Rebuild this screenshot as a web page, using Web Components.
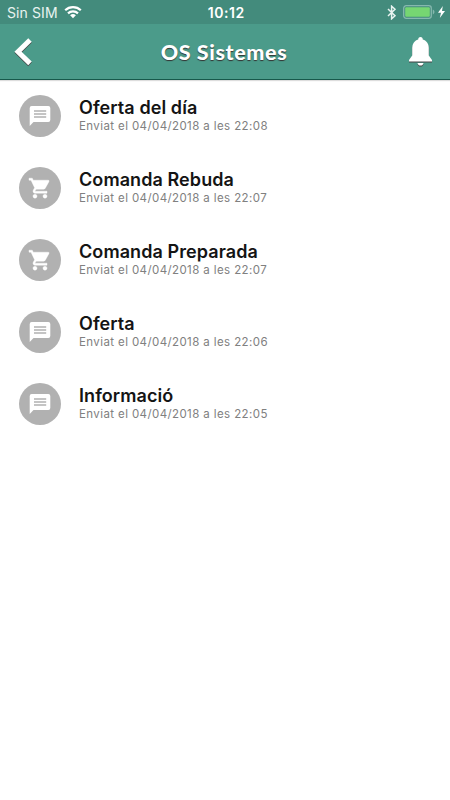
<!DOCTYPE html>
<html lang="ca">
<head>
	<meta charset="utf-8">
	<title>OS Sistemes</title>
	<style>
		body {
			margin: 0;
			background: #fff;
			font-family: Inter, "Liberation Sans", sans-serif;
		}
	</style>
</head>
<body>
	<app-header>
		<status-bar slot="status" carrier="Sin SIM" time="10:12"></status-bar>
		OS Sistemes
	</app-header>
	<notification-list>
		<notification-item icon="message" date="04/04/2018" time="22:08">Oferta del día</notification-item>
		<notification-item icon="cart" date="04/04/2018" time="22:07">Comanda Rebuda</notification-item>
		<notification-item icon="cart" date="04/04/2018" time="22:07">Comanda Preparada</notification-item>
		<notification-item icon="message" date="04/04/2018" time="22:06">Oferta</notification-item>
		<notification-item icon="message" date="04/04/2018" time="22:05">Informació</notification-item>
	</notification-list>

	<script>
		const icons = {
			message: /*html*/`
				<svg width="42" height="42" viewBox="0 0 42 42">
					<path fill="#fff" d="M12.700 11h16.600a2 2 0 0 1 2 2v12a2 2 0 0 1-2 2H14.500L10.700 31V13a2 2 0 0 1 2-2z"/>
					<path stroke="#b1b1b1" stroke-width="1.300" d="M15 16h12.200M15 19h12.200M15 22h12.200"/>
				</svg>`,
			cart: /*html*/`
				<svg width="42" height="42" viewBox="0 0 42 42">
					<g fill="#fff" stroke="#fff" stroke-width=".4" transform="translate(9 9.200)">
						<path d="M7 18c-1.100 0-1.990.9-1.990 2S5.900 22 7 22s2-.9 2-2-.9-2-2-2zM1 2v2h2l3.600 7.590-1.350 2.450c-.16.28-.25.61-.25.96 0 1.100.9 2 2 2h12v-2H7.420c-.14 0-.25-.11-.25-.25l.03-.12.9-1.630h7.450c.75 0 1.410-.41 1.750-1.030l3.580-6.490A1 1 0 0 0 20 4H5.210l-.94-2H1zm16 16c-1.100 0-1.990.9-1.990 2s.89 2 1.990 2 2-.9 2-2-.9-2-2-2z"/>
					</g>
				</svg>`
		};

		class StatusBar extends HTMLElement {
			constructor() {
				super();

				const shadowRoot = this.attachShadow({ mode: 'open' });
				shadowRoot.innerHTML = /*html*/`
					<style>
						:host {
							display: grid;
							grid-template-columns: 1fr auto 1fr;
							align-items: center;
							box-sizing: border-box;
							height: 24px;
							padding: 1px 5.5px 0 7px;
							background: #438b7c;
							color: #fff;
							font: 400 14px/22px Inter, sans-serif;
						}
						svg {
							display: block;
						}
						.left, .right {
							display: flex;
							align-items: center;
						}
						.left {
							gap: 6px;
							color: #e8f3f0;
							letter-spacing: 0.1px;
						}
						.right {
							justify-content: flex-end;
						}
						.right svg {
							position: relative;
							top: -0.5px;
						}
						#time {
							padding-left: 1px;
							font-weight: 600;
							font-size: 14px;
							letter-spacing: 0.5px;
						}
						.bluetooth {
							margin-right: 6px;
						}
						.bolt {
							margin-left: 3px;
						}
					</style>
					<div class="left">
						<span id="carrier"></span>
						<svg width="18" height="13" viewBox="0 0 18 13">
							<g fill="none" stroke="#fff" stroke-width="2.200">
								<path d="M1.200 4.300a11.200 11.200 0 0 1 15.600 0"/>
								<path d="M4 7.400a7.200 7.200 0 0 1 10 0"/>
							</g>
							<path fill="#fff" d="M9 12.300l-2.900-3a4.200 4.200 0 0 1 5.800 0z"/>
						</svg>
					</div>
					<span id="time"></span>
					<div class="right">
						<svg class="bluetooth" width="10" height="15" viewBox="0 0 10 15">
							<path fill="none" stroke="#e8f3f0" stroke-width="1.500" d="M1 4l7 6.800-3.400 3V1.200L8 4.200 1 11"/>
						</svg>
						<svg width="32" height="14" viewBox="0 0 32 14">
							<rect x=".7" y=".7" width="27.600" height="12.600" rx="2.500" fill="none" stroke="#86b8ae" stroke-width="1.300"/>
							<rect x="2.200" y="2.200" width="24.600" height="9.600" rx="1" fill="#76d672"/>
							<path fill="#86b8ae" d="M29.800 4.600c2.200.8 2.200 4 0 4.800z"/>
						</svg>
						<svg class="bolt" width="7" height="12" viewBox="0 0 7 12">
							<path fill="#fff" d="M4.800 0L0 6.700h3L1.800 12 7 5H4z"/>
						</svg>
					</div>
				`;
				this.carrier = shadowRoot.querySelector('#carrier');
				this.time = shadowRoot.querySelector('#time');
			}

			connectedCallback() {
				this.carrier.textContent = this.getAttribute('carrier');
				this.time.textContent = this.getAttribute('time');
			}
		}

		class AppHeader extends HTMLElement {
			constructor() {
				super();

				const shadowRoot = this.attachShadow({ mode: 'open' });
				shadowRoot.innerHTML = /*html*/`
					<style>
						:host {
							display: block;
							box-sizing: border-box;
							height: 80px;
							background: #4b9b8a;
							border-bottom: 1px solid #17594b;
							box-shadow: 0 1px 1px #ddd;
						}
						.bar {
							display: grid;
							grid-template-columns: 1fr auto 1fr;
							align-items: center;
							height: 55px;
							padding: 0 17px 0 14px;
						}
						h1 {
							margin: 0;
							padding-left: 1px;
							color: #fff;
							font: 900 21.5px/28px Lato, sans-serif;
							letter-spacing: 0.6px;
							text-shadow: 0 1px 1px #333;
						}
						button {
							display: block;
							padding: 0;
							border: 0;
							background: none;
						}
						button:last-child {
							justify-self: end;
						}
						svg {
							display: block;
							filter: drop-shadow(0 1px 0.5px #444);
						}
					</style>
					<slot name="status"></slot>
					<div class="bar">
						<button type="button" aria-label="Enrere">
							<svg width="20" height="28" viewBox="0 0 20 28">
								<path fill="none" stroke="#fff" stroke-width="5" d="M16 2L4 13.700 16 25.400"/>
							</svg>
						</button>
						<h1><slot></slot></h1>
						<button type="button" aria-label="Notificacions">
							<svg width="25" height="30" viewBox="0 0 25 30">
								<path fill="#fff" d="M12.500 0c-1.500 0-2.300 1-2.300 2.400C6.200 3.600 4.200 7 4.200 11v7.500L1 23v1.500h23V23l-3.200-4.500V11c0-4-2-7.400-6-8.600C14.800 1 14 0 12.500 0zM9.500 26c.3 1.600 1.400 2.600 3 2.600s2.700-1 3-2.600z"/>
							</svg>
						</button>
					</div>
				`;
			}
		}

		class NotificationList extends HTMLElement {
			constructor() {
				super();

				const shadowRoot = this.attachShadow({ mode: 'open' });
				shadowRoot.innerHTML = /*html*/`
					<style>
						:host {
							display: flex;
							flex-direction: column;
						}
					</style>
					<slot></slot>
				`;
			}
		}

		class NotificationItem extends HTMLElement {
			constructor() {
				super();

				const shadowRoot = this.attachShadow({ mode: 'open' });
				shadowRoot.innerHTML = /*html*/`
					<style>
						:host {
							display: flex;
							align-items: center;
							gap: 18px;
							box-sizing: border-box;
							height: 72px;
							padding: 0 19px;
						}
						#icon {
							width: 42px;
							height: 42px;
							border-radius: 50%;
							background: #b1b1b1;
						}
						#icon svg {
							display: block;
						}
						h2 {
							margin: 0;
							color: #141414;
							font: 600 18px/20px Inter, sans-serif;
							letter-spacing: 0.08px;
						}
						p {
							margin: 0;
							color: #808080;
							font: 400 11.5px/16px Inter, sans-serif;
							letter-spacing: 0.4px;
						}
					</style>
					<div id="icon"></div>
					<div>
						<h2><slot></slot></h2>
						<p id="sent"></p>
					</div>
				`;
				this.icon = shadowRoot.querySelector('#icon');
				this.sent = shadowRoot.querySelector('#sent');
			}

			connectedCallback() {
				this.icon.innerHTML = icons[this.getAttribute('icon')] || '';
				this.sent.textContent = `Enviat el ${this.getAttribute('date')} a les ${this.getAttribute('time')}`;
			}
		}

		customElements.define('status-bar', StatusBar);
		customElements.define('app-header', AppHeader);
		customElements.define('notification-list', NotificationList);
		customElements.define('notification-item', NotificationItem);
	</script>
</body>
</html>
